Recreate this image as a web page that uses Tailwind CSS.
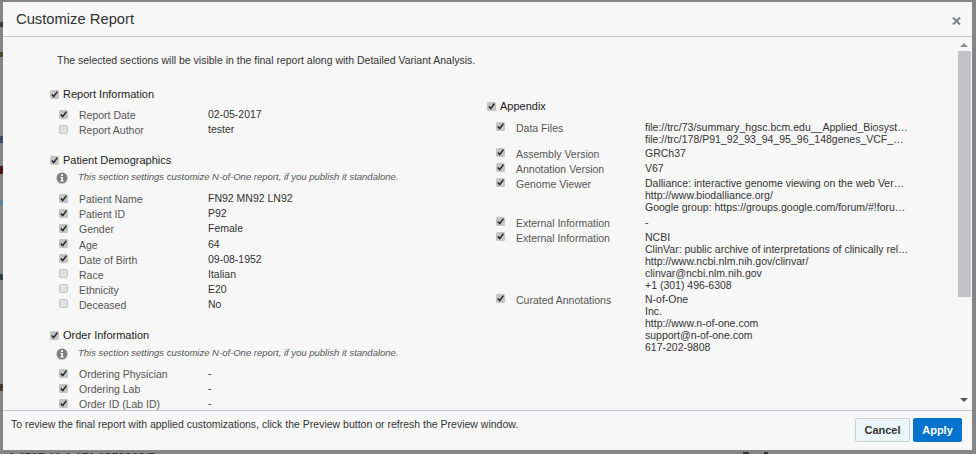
<!DOCTYPE html>
<html lang="en">
<head>
<meta charset="UTF-8">
<title>Customize Report</title>
<script src="https://cdn.jsdelivr.net/npm/@tailwindcss/browser@4"></script>
</head>
<body class="relative h-[454px] w-[976px] overflow-hidden bg-[#858585] font-['Liberation_Sans',Arial,sans-serif] text-[10.5px] text-[#333]">
  <!-- checkbox sprites -->
  <svg class="hidden">
    <symbol id="on" viewBox="0 0 9 9">
      <rect x="0" y="0" width="9" height="9" rx="1.5" fill="#c4c4c4"/>
      <path d="M1.8 4.6 L3.7 6.6 L7.4 1.6" fill="none" stroke="#222" stroke-width="1.5"/>
    </symbol>
    <symbol id="off" viewBox="0 0 9 9">
      <rect x="0.5" y="0.5" width="8" height="8" rx="1.5" fill="#e2e2e2" stroke="#c2c2c2"/>
    </symbol>
    <symbol id="info" viewBox="0 0 12 12">
      <circle cx="6" cy="6" r="5.5" fill="#7d7d7d"/>
      <rect x="5" y="2.2" width="2" height="1.8" fill="#f7f7f7"/>
      <path d="M4.4 5h2.6v3.6h.8v1H4.4v-1h.8V6h-.8z" fill="#f7f7f7"/>
    </symbol>
  </svg>

  <!-- page behind the backdrop -->
  <div class="absolute left-[8px] top-[451px] text-[12px] font-bold leading-[14px] text-[#333]">0 4597 10 0 170 0070000 7</div>
  <div class="absolute left-[743px] top-[452px] h-[2px] w-[6px] bg-[#333]"></div>
  <div class="absolute left-[764px] top-[452px] h-[2px] w-[4px] bg-[#333]"></div>
  <div class="absolute left-0 top-[22px] h-[5px] w-[3px] bg-[#3d3a38]"></div>
  <div class="absolute left-0 top-[52px] h-[5px] w-[3px] bg-[#4a4a28]"></div>
  <div class="absolute left-0 top-[136px] h-[7px] w-[3px] bg-[#3a4a60]"></div>
  <div class="absolute left-0 top-[166px] h-[8px] w-[3px] bg-[#4a1518]"></div>
  <div class="absolute left-0 top-[200px] h-[6px] w-[3px] bg-[#5a84a0]"></div>
  <div class="absolute left-0 top-[274px] h-[6px] w-[3px] bg-[#2f3c4a]"></div>
  <div class="absolute left-0 top-[384px] h-[7px] w-[3px] bg-[#4a3a28]"></div>

  <div class="relative ml-[3px] mt-[2px] inline-flex h-[448px] w-[969px] flex-col bg-[#f7f7f7] align-top">
    <!-- Header -->
    <div class="flex h-[35px] shrink-0 items-center justify-between border-b border-[#c4c4cc] pl-[13px] pr-[10px]">
      <h1 class="mt-[1px] text-[14.75px] text-[#333]">Customize Report</h1>
      <svg class="mr-[1px] mt-[3px] h-[8px] w-[9px]" viewBox="0 0 9 8"><path d="M1 .5l7 7M8 .5l-7 7" stroke="#76828e" stroke-width="2"/></svg>
    </div>

    <!-- Body -->
    <div class="flex min-h-0 flex-1 overflow-hidden">
      <div class="min-w-0 flex-1 overflow-hidden">
        <p class="ml-[54px] mt-[16px] h-[15px] leading-[15px]">The selected sections will be visible in the final report along with Detailed Variant Analysis.</p>
        <div class="flex">
          <!-- Left column -->
          <div class="ml-[47px] mt-[19px] w-[437px]">
            <label class="flex h-[15px] items-center gap-[4px] text-[11px] text-[#222]"><svg class="h-[9px] w-[9px]"><use href="#on"/></svg>Report Information</label>
            <div class="ml-[9px] mt-[6.5px]">
              <div class="flex h-[15px] items-center"><svg class="mb-[4px] h-[9px] w-[9px]"><use href="#on"/></svg><span class="ml-[11px] w-[129px] text-[#555]">Report Date</span><span class="mb-[2px]">02-05-2017</span></div>
              <div class="flex h-[15px] items-center"><svg class="mb-[4px] h-[9px] w-[9px]"><use href="#off"/></svg><span class="ml-[11px] w-[129px] text-[#555]">Report Author</span><span class="mb-[2px]">tester</span></div>
            </div>

            <label class="mt-[14px] flex h-[15px] items-center gap-[4px] text-[11px] text-[#222]"><svg class="h-[9px] w-[9px]"><use href="#on"/></svg>Patient Demographics</label>
            <div class="ml-[6px] mt-[2px] flex h-[16px] items-center gap-[10px] text-[9.5px] italic text-[#555]"><svg class="h-[12px] w-[12px]"><use href="#info"/></svg>This section settings customize N-of-One report, if you publish it standalone.</div>
            <div class="ml-[9px] mt-[7px]">
              <div class="flex h-[15.14px] items-center"><svg class="mb-[4px] h-[9px] w-[9px]"><use href="#on"/></svg><span class="ml-[11px] w-[129px] text-[#555]">Patient Name</span><span class="mb-[2px]">FN92 MN92 LN92</span></div>
              <div class="flex h-[15.14px] items-center"><svg class="mb-[4px] h-[9px] w-[9px]"><use href="#on"/></svg><span class="ml-[11px] w-[129px] text-[#555]">Patient ID</span><span class="mb-[2px]">P92</span></div>
              <div class="flex h-[15.14px] items-center"><svg class="mb-[4px] h-[9px] w-[9px]"><use href="#on"/></svg><span class="ml-[11px] w-[129px] text-[#555]">Gender</span><span class="mb-[2px]">Female</span></div>
              <div class="flex h-[15.14px] items-center"><svg class="mb-[4px] h-[9px] w-[9px]"><use href="#on"/></svg><span class="ml-[11px] w-[129px] text-[#555]">Age</span><span class="mb-[2px]">64</span></div>
              <div class="flex h-[15.14px] items-center"><svg class="mb-[4px] h-[9px] w-[9px]"><use href="#on"/></svg><span class="ml-[11px] w-[129px] text-[#555]">Date of Birth</span><span class="mb-[2px]">09-08-1952</span></div>
              <div class="flex h-[15.14px] items-center"><svg class="mb-[4px] h-[9px] w-[9px]"><use href="#off"/></svg><span class="ml-[11px] w-[129px] text-[#555]">Race</span><span class="mb-[2px]">Italian</span></div>
              <div class="flex h-[15.14px] items-center"><svg class="mb-[4px] h-[9px] w-[9px]"><use href="#off"/></svg><span class="ml-[11px] w-[129px] text-[#555]">Ethnicity</span><span class="mb-[2px]">E20</span></div>
              <div class="flex h-[15.14px] items-center"><svg class="mb-[4px] h-[9px] w-[9px]"><use href="#off"/></svg><span class="ml-[11px] w-[129px] text-[#555]">Deceased</span><span class="mb-[2px]">No</span></div>
            </div>

            <label class="mt-[14px] flex h-[15px] items-center gap-[4px] text-[11px] text-[#222]"><svg class="h-[9px] w-[9px]"><use href="#on"/></svg>Order Information</label>
            <div class="ml-[6px] mt-[3px] flex h-[16px] items-center gap-[10px] text-[9.5px] italic text-[#555]"><svg class="h-[12px] w-[12px]"><use href="#info"/></svg>This section settings customize N-of-One report, if you publish it standalone.</div>
            <div class="ml-[9px] mt-[6px]">
              <div class="flex h-[15px] items-center"><svg class="mb-[4px] h-[9px] w-[9px]"><use href="#on"/></svg><span class="ml-[11px] w-[129px] text-[#555]">Ordering Physician</span><span class="mb-[2px]">-</span></div>
              <div class="flex h-[15px] items-center"><svg class="mb-[4px] h-[9px] w-[9px]"><use href="#on"/></svg><span class="ml-[11px] w-[129px] text-[#555]">Ordering Lab</span><span class="mb-[2px]">-</span></div>
              <div class="flex h-[15px] items-center"><svg class="mb-[4px] h-[9px] w-[9px]"><use href="#on"/></svg><span class="ml-[11px] w-[129px] text-[#555]">Order ID (Lab ID)</span><span class="mb-[2px]">-</span></div>
            </div>
          </div>

          <!-- Right column -->
          <div class="mt-[31px] w-[430px]">
            <label class="flex h-[15px] items-center gap-[4px] text-[11px] text-[#222]"><svg class="h-[9px] w-[9px]"><use href="#on"/></svg>Appendix</label>
            <div class="ml-[9px] mt-[6.5px] w-[414px]">
              <div class="flex items-start pb-[2.5px]"><svg class="mt-[1px] h-[9px] w-[9px] shrink-0"><use href="#on"/></svg><span class="ml-[11px] mt-[1px] w-[129px] shrink-0 leading-[12px] text-[#555]">Data Files</span><div class="w-[264px] leading-[12px]"><div class="truncate">file://trc/73/summary_hgsc.bcm.edu__Applied_Biosystems_AmpliSeq_Panel</div><div class="truncate">file://trc/178/P91_92_93_94_95_96_148genes_VCF_annotated_output_file</div></div></div>
              <div class="flex h-[15px] items-center"><svg class="mb-[4px] h-[9px] w-[9px] shrink-0"><use href="#on"/></svg><span class="ml-[11px] w-[129px] shrink-0 text-[#555]">Assembly Version</span><span class="mb-[2px]">GRCh37</span></div>
              <div class="flex h-[15px] items-center"><svg class="mb-[4px] h-[9px] w-[9px] shrink-0"><use href="#on"/></svg><span class="ml-[11px] w-[129px] shrink-0 text-[#555]">Annotation Version</span><span class="mb-[2px]">V67</span></div>
              <div class="flex items-start pb-[3px]"><svg class="mt-[1px] h-[9px] w-[9px] shrink-0"><use href="#on"/></svg><span class="ml-[11px] mt-[1px] w-[129px] shrink-0 leading-[12px] text-[#555]">Genome Viewer</span><div class="w-[264px] leading-[12px]"><div class="truncate">Dalliance: interactive genome viewing on the web Version 0.13 release</div><div>http://www.biodalliance.org/</div><div class="truncate">Google group: https://groups.google.com/forum/#!forum/biodalliance-dev</div></div></div>
              <div class="flex h-[15px] items-center"><svg class="mb-[4px] h-[9px] w-[9px] shrink-0"><use href="#on"/></svg><span class="ml-[11px] w-[129px] shrink-0 text-[#555]">External Information</span><span class="mb-[2px]">-</span></div>
              <div class="flex items-start pb-[2px]"><svg class="mt-[1px] h-[9px] w-[9px] shrink-0"><use href="#on"/></svg><span class="ml-[11px] mt-[1px] w-[129px] shrink-0 leading-[12px] text-[#555]">External Information</span><div class="w-[264px] leading-[12px]"><div>NCBI</div><div class="truncate">ClinVar: public archive of interpretations of clinically relevant variants</div><div>http://www.ncbi.nlm.nih.gov/clinvar/</div><div>clinvar@ncbi.nlm.nih.gov</div><div>+1 (301) 496-6308</div></div></div>
              <div class="flex items-start"><svg class="mt-[1px] h-[9px] w-[9px] shrink-0"><use href="#on"/></svg><span class="ml-[11px] mt-[1px] w-[129px] shrink-0 leading-[12px] text-[#555]">Curated Annotations</span><div class="w-[264px] leading-[12px]"><div>N-of-One</div><div>Inc.</div><div>http://www.n-of-one.com</div><div>support@n-of-one.com</div><div>617-202-9808</div></div></div>
            </div>
          </div>
        </div>
      </div>
      <!-- Scrollbar -->
      <div class="flex w-[15px] shrink-0 flex-col items-center pr-[1px]">
        <div class="mt-[6px] h-0 w-0 border-x-[4px] border-b-[4px] border-x-transparent border-b-[#8a8f8a]"></div>
        <div class="mt-[4px] h-[246px] w-[13px] bg-[#c2c2c8]"></div>
        <div class="mb-[8px] mt-auto h-0 w-0 border-x-[4px] border-t-[4px] border-x-transparent border-t-[#555]"></div>
      </div>
    </div>

    <!-- Footer -->
    <div class="flex h-[40px] shrink-0 items-start justify-between border-t border-[#c4c4cc] pl-[8px] pr-[10px]">
      <p class="mt-[6px] leading-[15px]">To review the final report with applied customizations, click the Preview button or refresh the Preview window.</p>
      <div class="mt-[7px] flex gap-[3px]">
        <button class="h-[24px] w-[55px] rounded-[2px] border border-[#c4d0d4] bg-[#eaf6fa] text-[11px] font-bold text-[#333]">Cancel</button>
        <button class="h-[24px] w-[49px] rounded-[2px] bg-[#0572ce] text-[11px] font-bold text-white">Apply</button>
      </div>
    </div>
  </div>
</body>
</html>
